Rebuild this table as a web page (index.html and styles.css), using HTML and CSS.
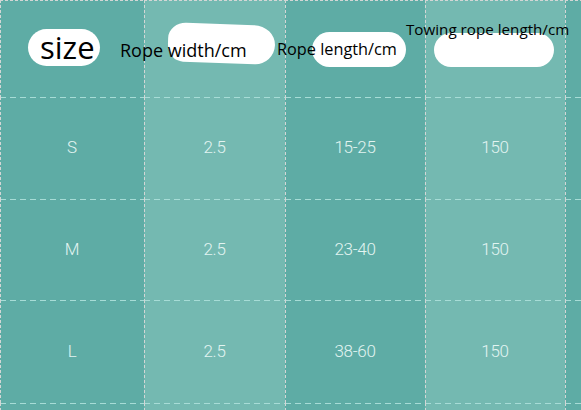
FILE: index.html
```html
<!DOCTYPE html>
<html>
<head>
<meta charset="utf-8">
<link rel="stylesheet" href="styles.css">
</head>
<body>
<div class="sheet">
  <div class="grid">
    <div class="cell head dark"></div>
    <div class="cell head light"></div>
    <div class="cell head dark"></div>
    <div class="cell head light"></div>
    <div class="cell head dark"></div>

    <div class="cell dark">S</div>
    <div class="cell light">2.5</div>
    <div class="cell dark">15-25</div>
    <div class="cell light">150</div>
    <div class="cell dark"></div>

    <div class="cell dark">M</div>
    <div class="cell light">2.5</div>
    <div class="cell dark">23-40</div>
    <div class="cell light">150</div>
    <div class="cell dark"></div>

    <div class="cell dark">L</div>
    <div class="cell light">2.5</div>
    <div class="cell dark">38-60</div>
    <div class="cell light">150</div>
    <div class="cell dark"></div>

    <div class="cell dark"></div>
    <div class="cell light"></div>
    <div class="cell dark"></div>
    <div class="cell light"></div>
    <div class="cell dark"></div>
  </div>

  <div class="labels">
    <span class="blob blob-size"></span>
    <span class="blob blob-width"></span>
    <span class="blob blob-length"></span>
    <span class="blob blob-tow"></span>
    <span class="label label-size">size</span>
    <span class="label label-width">Rope width/cm</span>
    <span class="label label-length">Rope length/cm</span>
    <span class="label label-tow">Towing rope length/cm</span>
  </div>
</div>
</body>
</html>
```

FILE: styles.css
```css
html, body {
  margin: 0;
  padding: 0;
  background: #5eaca5;
}

.sheet {
  position: relative;
  width: 581px;
  height: 410px;
  overflow: hidden;
}

.grid {
  display: grid;
  grid-template-columns: 144px 141px 140px 140px 16px;
  grid-template-rows: 97px 102px 101px 103px 7px;
}

.cell {
  display: flex;
  align-items: center;
  justify-content: center;
  padding-bottom: 2px;
  font-family: Roboto, "Liberation Sans", sans-serif;
  font-weight: 300;
  font-size: 17px;
  letter-spacing: -0.3px;
  color: #e2f4f1;
  background:
    repeating-linear-gradient(to bottom, #d3d6d5 0 3px, transparent 3px 5px) left top / 1px 100% no-repeat,
    repeating-linear-gradient(to right, #a7dcd6 0 6px, transparent 6px 10px) left top / 100% 1px no-repeat,
    var(--bg);
}

.cell.head {
  background:
    repeating-linear-gradient(to bottom, #d3d6d5 0 3px, transparent 3px 5px) left top / 1px 100% no-repeat,
    repeating-linear-gradient(to right, #d3d6d5 0 3px, transparent 3px 5px) left top / 100% 1px no-repeat,
    var(--bg);
}

.dark { --bg: #5eaca5; }
.light { --bg: #74b9b1; }

.labels {
  position: absolute;
  inset: 0;
  pointer-events: none;
}

.blob {
  position: absolute;
  background: #ffffff;
}

.blob-size {
  left: 28px;
  top: 29px;
  width: 72px;
  height: 37px;
  border-radius: 19px;
}

.blob-width {
  left: 168px;
  top: 24px;
  width: 107px;
  height: 39px;
  border-radius: 18px 22px 20px 16px / 16px 20px 20px 18px;
  transform: rotate(2deg);
}

.blob-length {
  left: 312px;
  top: 32px;
  width: 94px;
  height: 35px;
  border-radius: 18px;
}

.blob-tow {
  left: 434px;
  top: 33px;
  width: 120px;
  height: 34px;
  border-radius: 17px;
}

.label {
  position: absolute;
  font-family: "Open Sans", "Noto Sans", sans-serif;
  color: #000000;
  white-space: nowrap;
  line-height: 1;
}

.label-size {
  left: 40px;
  top: 32px;
  font-size: 31px;
}

.label-width {
  left: 120px;
  top: 41px;
  font-size: 18px;
}

.label-length {
  left: 277px;
  top: 41px;
  font-size: 16.3px;
}

.label-tow {
  left: 406px;
  top: 22px;
  font-size: 15.2px;
}
```
